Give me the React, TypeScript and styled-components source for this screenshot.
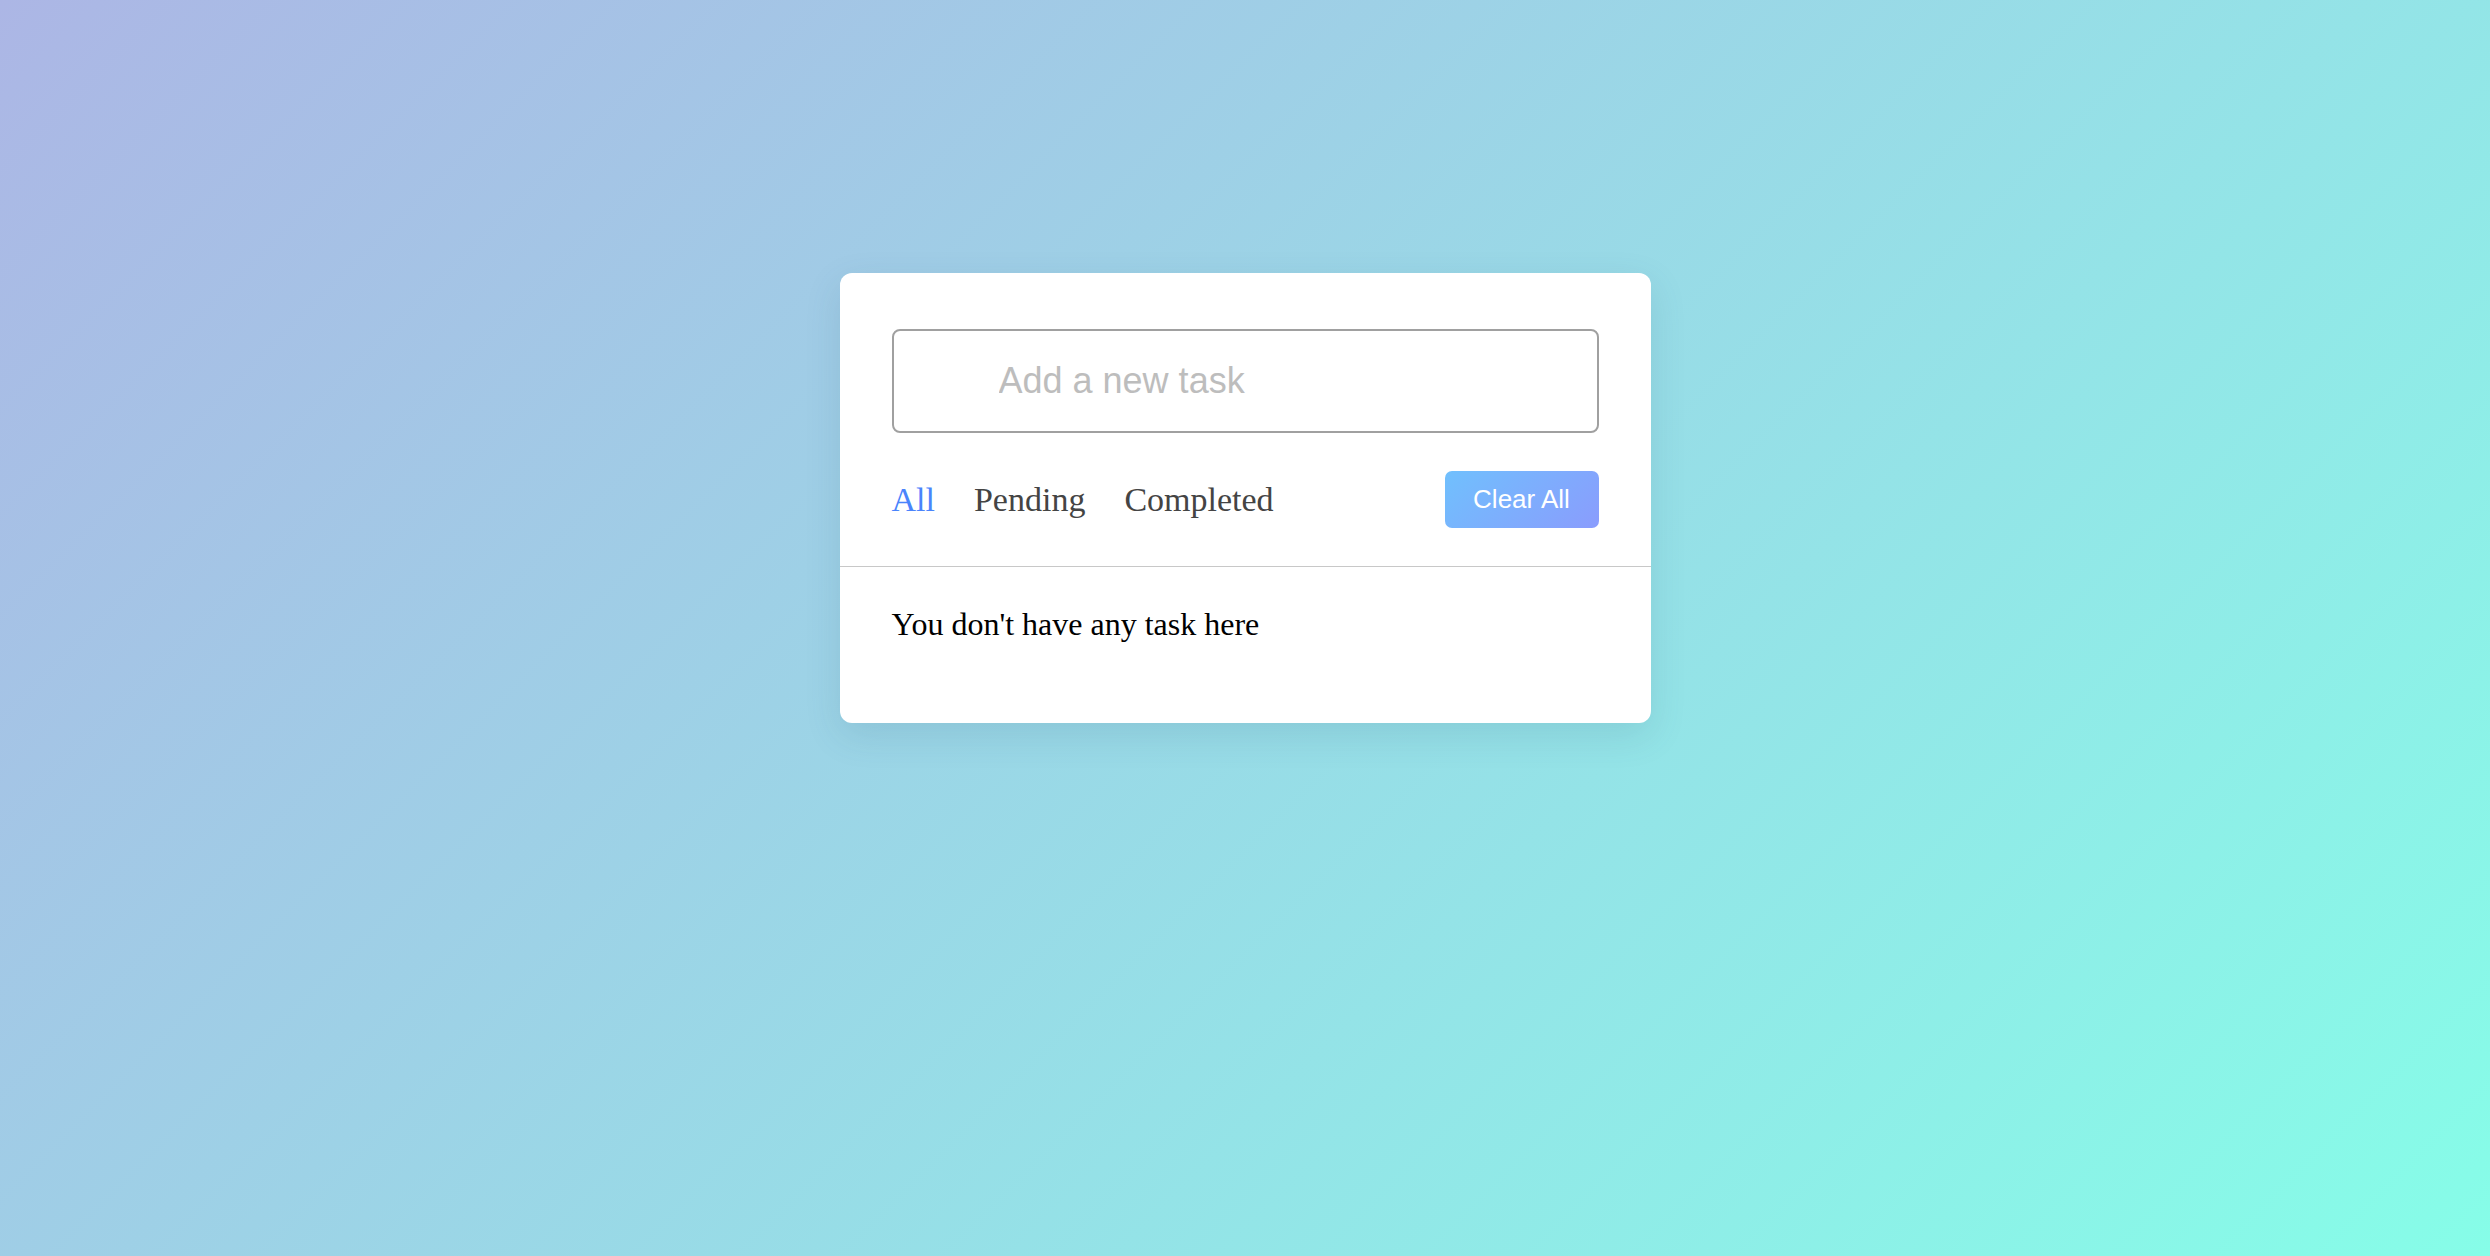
import React from "react";
import styled, { createGlobalStyle } from "styled-components";

const GlobalStyle = createGlobalStyle`
  * { box-sizing: border-box; }
  html, body { margin: 0; padding: 0; height: 100%; }
  body {
    font-family: "Liberation Serif", "Times New Roman", serif;
    background: linear-gradient(135deg, #acb6e5 0%, #86fde8 100%);
    min-height: 100vh;
  }
`;

const Page = styled.main`
  min-height: 100vh;
  display: flex;
  justify-content: center;
  align-items: flex-start;
  padding-top: 273px;
`;

const Card = styled.section`
  width: 811px;
  background: #ffffff;
  border-radius: 12px;
  box-shadow: 0 12px 36px rgba(40, 90, 120, 0.14);
`;

const Header = styled.div`
  padding: 56px 52px 38px;
  border-bottom: 1px solid #c8c8c8;
`;

const TaskInput = styled.input`
  display: block;
  width: 100%;
  height: 104px;
  border: 2px solid #a0a0a0;
  border-radius: 8px;
  padding: 0 20px 0 105px;
  font-family: "Liberation Sans", Arial, sans-serif;
  font-size: 36px;
  color: #333;
  outline: none;
  &::placeholder {
    color: #bdbdbd;
  }
`;

const Controls = styled.div`
  margin-top: 38px;
  display: flex;
  align-items: center;
  justify-content: space-between;
`;

const Filters = styled.div`
  display: flex;
  align-items: center;
  gap: 39px;
`;

const Filter = styled.span<{ $active?: boolean }>`
  font-family: "Liberation Serif", "Times New Roman", serif;
  font-size: 34px;
  color: ${(p) => (p.$active ? "#4a84fc" : "#444444")};
  cursor: pointer;
`;

const ClearButton = styled.button`
  height: 57px;
  width: 154px;
  border: none;
  border-radius: 7px;
  background: linear-gradient(135deg, #70c0fd 0%, #8a9cfd 100%);
  color: #ffffff;
  font-family: "Liberation Sans", Arial, sans-serif;
  font-size: 26px;
  padding: 0;
  cursor: pointer;
`;

const TaskBox = styled.div`
  padding: 39px 52px 80px;
`;

const Empty = styled.p`
  margin: 0;
  font-family: "Liberation Serif", "Times New Roman", serif;
  font-size: 32px;
  color: #000;
`;

export default function App() {
  return (
    <>
      <GlobalStyle />
      <Page>
        <Card>
          <Header>
            <TaskInput type="text" placeholder="Add a new task" />
            <Controls>
              <Filters>
                <Filter $active>All</Filter>
                <Filter>Pending</Filter>
                <Filter>Completed</Filter>
              </Filters>
              <ClearButton>Clear All</ClearButton>
            </Controls>
          </Header>
          <TaskBox>
            <Empty>You don't have any task here</Empty>
          </TaskBox>
        </Card>
      </Page>
    </>
  );
}
